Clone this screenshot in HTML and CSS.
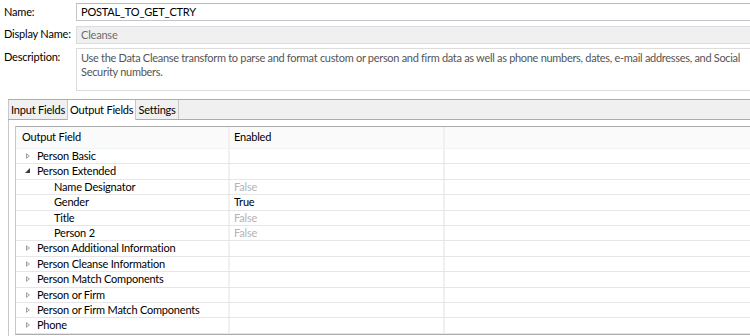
FILE: index.html
```html
<!DOCTYPE html>
<html>
<head>
  <meta charset="UTF-8" />
  <title>Cleanse</title>
  <link rel="stylesheet" href="styles.css">
</head>
<body>
  <div class="form">
    <label class="form-label">Name:</label>
    <div class="field field-name">POSTAL_TO_GET_CTRY</div>

    <label class="form-label">Display Name:</label>
    <div class="field field-readonly">Cleanse</div>

    <label class="form-label">Description:</label>
    <div class="field field-desc">Use the Data Cleanse transform to parse and format custom or person and firm data as well as phone numbers, dates, e-mail addresses, and Social Security numbers.</div>
  </div>

  <div class="tabs">
    <div class="tab-bar">
      <div class="tab">Input Fields</div>
      <div class="tab active">Output Fields</div>
      <div class="tab">Settings</div>
    </div>
    <div class="tab-panel">
      <div class="grid">
        <div class="row header">
          <div class="cell col-field">Output Field</div>
          <div class="cell col-enabled">Enabled</div>
          <div class="cell col-rest"></div>
        </div>
        <!-- rows -->
        <div class="row">
          <div class="cell col-field"><span class="twisty closed"></span>Person Basic</div>
          <div class="cell col-enabled"></div>
          <div class="cell col-rest"></div>
        </div>
        <div class="row">
          <div class="cell col-field"><span class="twisty open"></span>Person Extended</div>
          <div class="cell col-enabled"></div>
          <div class="cell col-rest"></div>
        </div>
        <div class="row">
          <div class="cell col-field child">Name Designator</div>
          <div class="cell col-enabled off">False</div>
          <div class="cell col-rest"></div>
        </div>
        <div class="row">
          <div class="cell col-field child">Gender</div>
          <div class="cell col-enabled on">True</div>
          <div class="cell col-rest"></div>
        </div>
        <div class="row">
          <div class="cell col-field child">Title</div>
          <div class="cell col-enabled off">False</div>
          <div class="cell col-rest"></div>
        </div>
        <div class="row">
          <div class="cell col-field child">Person 2</div>
          <div class="cell col-enabled off">False</div>
          <div class="cell col-rest"></div>
        </div>
        <div class="row">
          <div class="cell col-field"><span class="twisty closed"></span>Person Additional Information</div>
          <div class="cell col-enabled"></div>
          <div class="cell col-rest"></div>
        </div>
        <div class="row">
          <div class="cell col-field"><span class="twisty closed"></span>Person Cleanse Information</div>
          <div class="cell col-enabled"></div>
          <div class="cell col-rest"></div>
        </div>
        <div class="row">
          <div class="cell col-field"><span class="twisty closed"></span>Person Match Components</div>
          <div class="cell col-enabled"></div>
          <div class="cell col-rest"></div>
        </div>
        <div class="row">
          <div class="cell col-field"><span class="twisty closed"></span>Person or Firm</div>
          <div class="cell col-enabled"></div>
          <div class="cell col-rest"></div>
        </div>
        <div class="row">
          <div class="cell col-field"><span class="twisty closed"></span>Person or Firm Match Components</div>
          <div class="cell col-enabled"></div>
          <div class="cell col-rest"></div>
        </div>
        <div class="row">
          <div class="cell col-field"><span class="twisty closed"></span>Phone</div>
          <div class="cell col-enabled"></div>
          <div class="cell col-rest"></div>
        </div>
      </div>
    </div>
  </div>
</body>
</html>
```

FILE: styles.css
```css
* {
  margin: 0;
  padding: 0;
  box-sizing: border-box;
}

html, body {
  width: 750px;
  height: 336px;
  overflow: hidden;
}

body {
  font-family: Lato, 'Open Sans', sans-serif;
  font-size: 11px;
  letter-spacing: -0.2px;
  color: #000;
  background: #fff;
}

.form {
  display: grid;
  grid-template-columns: 76px 680px;
  row-gap: 4px;
  padding-top: 3px;
}

.form-label {
  padding-left: 4px;
  line-height: 18px;
  white-space: nowrap;
}

.field {
  border: 1px solid #c4c4cc;
  border-right: none;
  height: 18px;
  padding-left: 4px;
  line-height: 16px;
}

.field-name {
  border-top-color: #b8b8c0;
}

.field-readonly {
  background: #f0f0f0;
  color: #6d6d6d;
  margin-top: 1px;
  border-color: #dcdcdc;
}

.field-desc {
  height: 43px;
  color: #555;
  padding-top: 2px;
  line-height: 14px;
  border-color: #dcdcdc;
  padding-right: 12px;
  letter-spacing: -0.3px;
}

.tabs {
  margin-top: 8px;
  margin-left: 8px;
}

.tab-bar {
  display: flex;
  height: 21px;
  background: #f0f0f0;
  border-top: 1px solid #acacac;
  border-bottom: 1px solid #acacac;
}

.tab {
  padding: 0 2px;
  line-height: 19px;
  border-right: 1px solid #c8c8c8;
  border-left: 1px solid #c8c8c8;
  margin-right: -1px;
}

.tab.active {
  background: #fff;
  height: 20px;
  margin-bottom: -1px;
}

.tab-panel {
  border-left: 1px solid #c8c8c8;
  border-bottom: 1px solid #acacac;
  padding: 6px 0 2px 6px;
}

.grid {
  border-top: 1px solid #acacac;
  border-left: 1px solid #c8c8c8;
  border-bottom: 1px solid #acacac;
}

.row {
  display: flex;
  height: 15.4px;
  border-bottom: 1px solid #e6e6e6;
}

.row.header {
  height: 22px;
  background: #fafafa;
  border-bottom: 1px solid #eef4f8;
}

.cell {
  line-height: 14px;
  white-space: nowrap;
  overflow: hidden;
}

.header .cell {
  line-height: 20px;
}

.col-field {
  width: 214px;
  padding-left: 6px;
  border-right: 2px solid #f0f0f0;
}

.col-enabled {
  width: 215px;
  padding-left: 4px;
  border-right: 2px solid #f0f0f0;
}

.col-rest {
  flex: 1;
}

.child {
  padding-left: 38px;
}

.off {
  color: #b4b4b4;
}

.twisty {
  display: inline-block;
  width: 15px;
  position: relative;
  height: 10px;
}

.twisty.closed::before {
  content: '';
  position: absolute;
  left: 4px;
  top: 3px;
  border-left: 4px solid #a0a0a0;
  border-top: 3.5px solid transparent;
  border-bottom: 3.5px solid transparent;
}

.twisty.closed::after {
  content: '';
  position: absolute;
  left: 5px;
  top: 5px;
  border-left: 2px solid #fff;
  border-top: 1.5px solid transparent;
  border-bottom: 1.5px solid transparent;
}

.twisty.open::before {
  content: '';
  position: absolute;
  left: 3px;
  top: 3px;
  border-right: 5px solid #3c3c3c;
  border-top: 5px solid transparent;
}
```
